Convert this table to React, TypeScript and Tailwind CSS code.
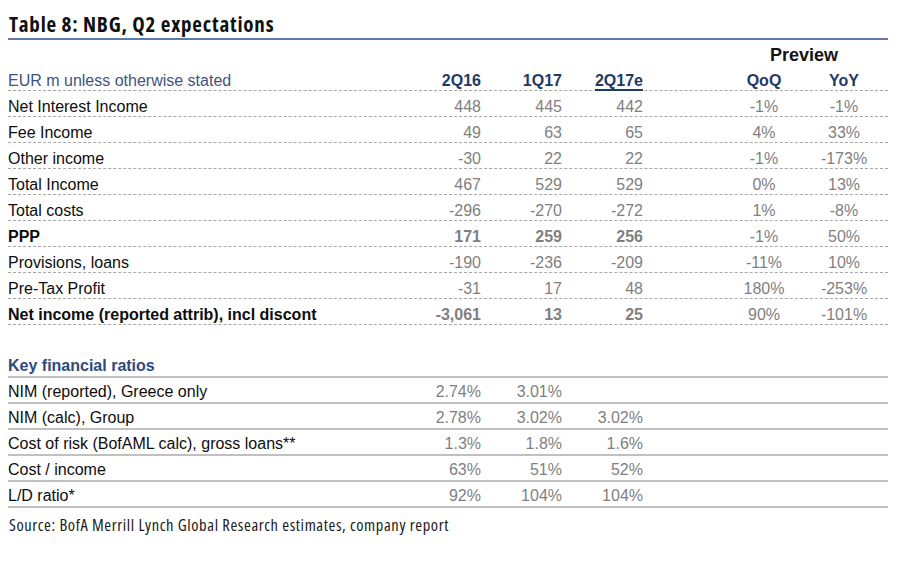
type Row = {
  label: string;
  values: [string, string, string, string, string];
  bold?: boolean;
};

type Ratio = {
  label: string;
  values: [string, string, string];
};

const rows: Row[] = [
  { label: "Net Interest Income", values: ["448", "445", "442", "-1%", "-1%"] },
  { label: "Fee Income", values: ["49", "63", "65", "4%", "33%"] },
  { label: "Other income", values: ["-30", "22", "22", "-1%", "-173%"] },
  { label: "Total Income", values: ["467", "529", "529", "0%", "13%"] },
  { label: "Total costs", values: ["-296", "-270", "-272", "1%", "-8%"] },
  { label: "PPP", values: ["171", "259", "256", "-1%", "50%"], bold: true },
  { label: "Provisions, loans", values: ["-190", "-236", "-209", "-11%", "10%"] },
  { label: "Pre-Tax Profit", values: ["-31", "17", "48", "180%", "-253%"] },
  {
    label: "Net income (reported attrib), incl discont",
    values: ["-3,061", "13", "25", "90%", "-101%"],
    bold: true,
  },
];

const ratios: Ratio[] = [
  { label: "NIM (reported), Greece only", values: ["2.74%", "3.01%", ""] },
  { label: "NIM (calc), Group", values: ["2.78%", "3.02%", "3.02%"] },
  { label: "Cost of risk (BofAML calc), gross loans**", values: ["1.3%", "1.8%", "1.6%"] },
  { label: "Cost / income", values: ["63%", "51%", "52%"] },
  { label: "L/D ratio*", values: ["92%", "104%", "104%"] },
];

// label | 2Q16 | 1Q17 | 2Q17e | gap | QoQ | YoY | tail
const cols = "grid grid-cols-[392px_81px_81px_81px_81px_80px_80px_4px]";
const dottedRow = `${cols} h-[26px] items-end pb-0 border-b border-dashed border-[#a8a8a8] leading-[18px]`;
const solidRow = `${cols} h-[26px] items-end pb-[1px] border-b-2 border-[#c0c0c0] leading-[18px]`;

export default function App() {
  return (
    <div className="min-h-[577px] w-[918px] bg-white pl-[8px] pr-[30px] font-['Liberation_Sans',Arial,sans-serif] text-[16px]">
      <div className="flex h-[40px] items-end border-b-2 border-[#5b7ba6] pb-[2px]">
        <h1 className="pl-[1px] font-['Open_Sans',sans-serif] text-[21px] font-bold leading-[24px] font-stretch-condensed tracking-[0.8px] text-[#111]">
          Table 8: NBG, Q2 expectations
        </h1>
      </div>

      <div className={`${cols} h-[25px] items-end leading-[20px]`}>
        <div className="col-span-5" />
        <div className="col-span-2 text-center text-[18px] font-bold text-[#141414]">Preview</div>
      </div>

      <div className={dottedRow}>
        <div className="text-[#3f5382]">EUR m unless otherwise stated</div>
        <div className="text-right font-bold text-[#1f3a66]">2Q16</div>
        <div className="text-right font-bold text-[#1f3a66]">1Q17</div>
        <div className="text-right font-bold text-[#1f3a66]">
          <span className="border-b-2 border-[#1f3a66]">2Q17e</span>
        </div>
        <div />
        <div className="text-center font-bold text-[#1f3a66]">QoQ</div>
        <div className="text-center font-bold text-[#1f3a66]">YoY</div>
        <div />
      </div>

      {rows.map((row) => (
        <div key={row.label} className={`${dottedRow} ${row.bold ? "font-bold" : ""}`}>
          <div className="text-[#0d0d0d]">{row.label}</div>
          <div className="text-right text-[#7f7f7f]">{row.values[0]}</div>
          <div className="text-right text-[#7f7f7f]">{row.values[1]}</div>
          <div className="text-right text-[#7f7f7f]">{row.values[2]}</div>
          <div />
          <div className="text-center font-normal text-[#7f7f7f]">{row.values[3]}</div>
          <div className="text-center font-normal text-[#7f7f7f]">{row.values[4]}</div>
          <div />
        </div>
      ))}

      <div className="h-[27px]" />

      <div className={solidRow}>
        <div className="col-span-8 font-bold text-[#2e4a7d]">Key financial ratios</div>
      </div>

      {ratios.map((r) => (
        <div key={r.label} className={solidRow}>
          <div className="text-[#0d0d0d]">{r.label}</div>
          <div className="text-right text-[#7f7f7f]">{r.values[0]}</div>
          <div className="text-right text-[#7f7f7f]">{r.values[1]}</div>
          <div className="text-right text-[#7f7f7f]">{r.values[2]}</div>
          <div className="col-span-4" />
        </div>
      ))}

      <p className="pt-[7px] pl-[1px] font-['Open_Sans',sans-serif] text-[16.5px] leading-[20px] font-stretch-condensed tracking-[0.6px] text-[#1a1a1a]">
        Source: BofA Merrill Lynch Global Research estimates, company report
      </p>
    </div>
  );
}
